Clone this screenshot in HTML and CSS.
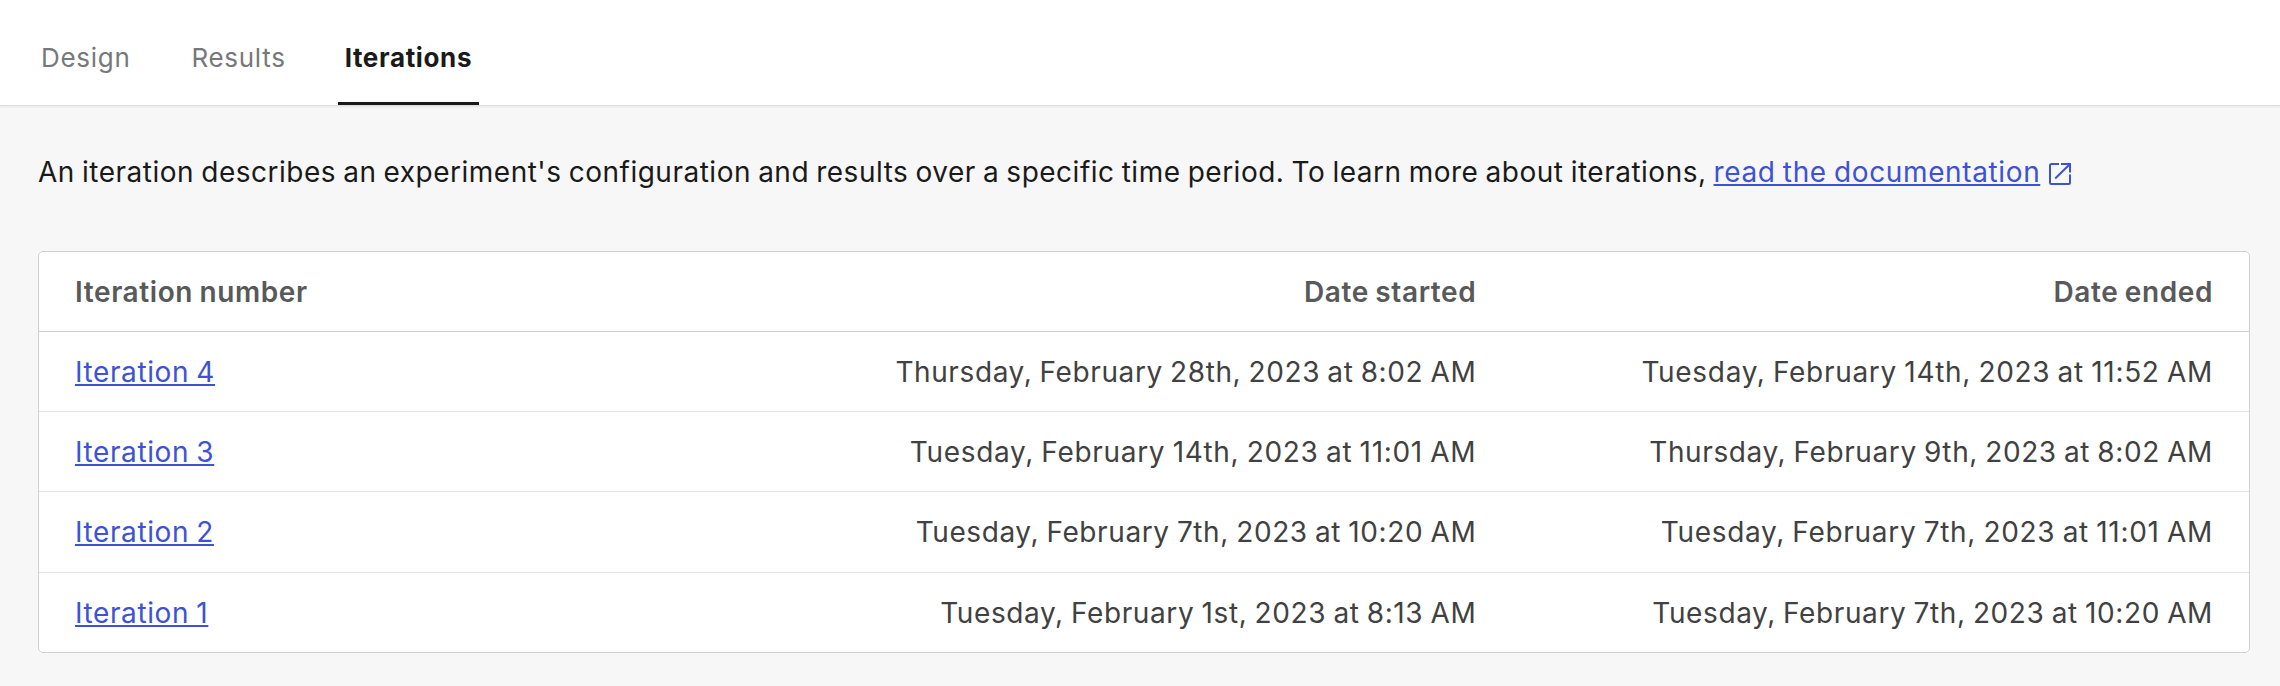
FILE: index.html
```html
<!DOCTYPE html>
<html lang="en">
<head>
<meta charset="utf-8">
<title>Iterations</title>
<link rel="stylesheet" href="styles.css">
</head>
<body>
<nav class="tabs">
  <a class="tab design">Design</a>
  <a class="tab results">Results</a>
  <a class="tab active">Iterations</a>
</nav>
<main class="content">
  <p class="intro"><span class="copy">An iteration describes an experiment's configuration and results over a specific time period. To learn more about iterations,</span> <a class="link doc">read the documentation</a><svg class="external" viewBox="0 0 22 22" fill="none" stroke="currentColor" stroke-width="2"><path d="M10 1H2.5Q1 1 1 2.5V19.5Q1 21 2.5 21H19.5Q21 21 21 19.5V11.5M12 1H21V9.5M21 1L6.2 15.5"/></svg></p>
  <table class="table">
    <thead><tr><th>Iteration number</th><th>Date started</th><th>Date ended</th></tr></thead>
    <tbody>
      <tr><td><a class="link">Iteration 4</a></td><td><span>Thursday, February 28th, 2023 at 8:02 AM</span></td><td><span class="early">Tuesday, February 14th, 2023 at 11:52 AM</span></td></tr>
      <tr><td><a class="link">Iteration 3</a></td><td><span class="early">Tuesday, February 14th, 2023 at 11:01 AM</span></td><td><span>Thursday, February 9th, 2023 at 8:02 AM</span></td></tr>
      <tr><td><a class="link">Iteration 2</a></td><td><span>Tuesday, February 7th, 2023 at 10:20 AM</span></td><td><span class="early">Tuesday, February 7th, 2023 at 11:01 AM</span></td></tr>
      <tr><td><a class="link">Iteration 1</a></td><td><span>Tuesday, February 1st, 2023 at 8:13 AM</span></td><td><span>Tuesday, February 7th, 2023 at 10:20 AM</span></td></tr>
    </tbody>
  </table>
</main>
</body>
</html>
```
FILE: styles.css
```css
* { box-sizing: border-box; }
body { margin: 0; background: #f7f7f7; color: #1a1a1a; font: 28px/40px Inter, sans-serif; letter-spacing: 0.5px; word-spacing: -1.2px; }
.tabs { display: flex; height: 105px; padding-left: 41px; background: #fff; box-shadow: 0 1px 0 #dedede, 0 2px 2px #e6e6e6; }
.tab { height: 105px; padding-top: 38px; font-size: 26px; letter-spacing: 0.7px; color: #77787b; }
.results { margin-left: 61px; }
.active { width: 141px; margin-left: 52px; padding-left: 7px; color: #1a1a1a; font-weight: 700; letter-spacing: 0.65px; border-bottom: 3px solid #1a1a1a; }
.content { padding: 47px 30px 0 38px; }
.intro { display: flex; align-items: center; height: 40px; margin: 0 0 59px; white-space: nowrap; }
.doc { margin-left: 7px; letter-spacing: 0.62px; }
.link { color: #3d52d5; text-decoration: underline; text-decoration-thickness: 2px; text-underline-offset: 2px; text-decoration-skip-ink: none; }
.external { width: 22px; height: 22px; margin: 4px 0 0 9px; color: #3d52d5; }
.table { width: 100%; table-layout: fixed; border-collapse: separate; border-spacing: 0; background: #fff; border: 1px solid #cfd0d0; border-radius: 5px; }
th, td { height: 80px; padding: 0 36px; text-align: right; color: #414141; white-space: nowrap; border-bottom: 1px solid #e2e3e3; }
td { letter-spacing: 0.6px; }
.early { letter-spacing: 0.69px; }
th { color: #58595a; font-weight: 600; letter-spacing: 0.6px; border-color: #cfd0d0; }
th:first-child, td:first-child { text-align: left; }
tbody tr:nth-child(3) td { height: 81px; }
tbody tr:last-child td { height: 79px; border-bottom: 0; }
```
